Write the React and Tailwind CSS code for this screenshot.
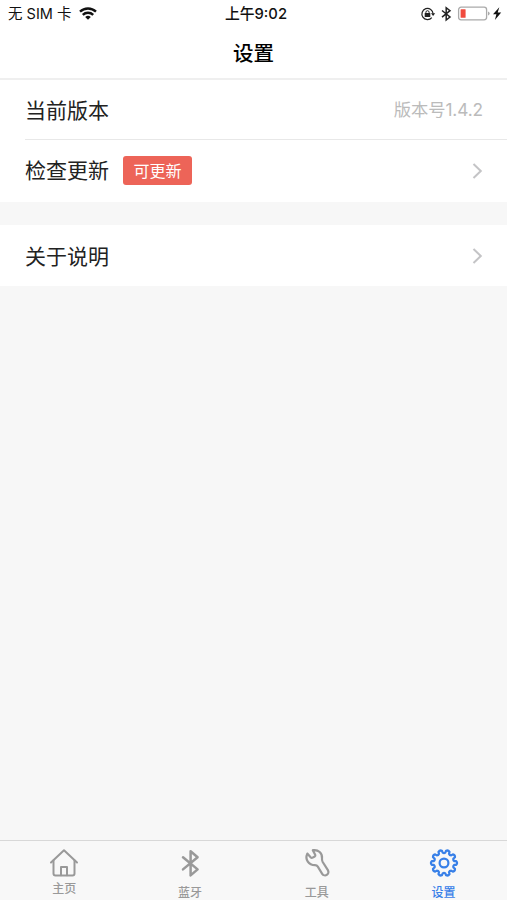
import clsx from 'clsx';

const GEAR_TEETH = 10;

/** Outline of the gear: rounded teeth around a 30x30 box. */
function gearPath() {
  const step = (Math.PI * 2) / GEAR_TEETH;
  const at = (radius, angle) => `${(15 + radius * Math.cos(angle)).toFixed(2)} ${(15 + radius * Math.sin(angle)).toFixed(2)}`;
  const parts = [];
  for (let i = 0; i < GEAR_TEETH; i++) {
    const a = i * step;
    parts.push(`${i === 0 ? 'M' : 'L'}${at(10.4, a - step * 0.3)}`);
    parts.push(`L${at(12.4, a - step * 0.23)}`);
    parts.push(`Q${at(13.8, a)} ${at(12.4, a + step * 0.23)}`);
    parts.push(`L${at(10.4, a + step * 0.3)}`);
    parts.push(`Q${at(9.4, a + step * 0.5)} ${at(10.4, a + step * 0.7)}`);
  }
  return `${parts.join('')}Z`;
}

const iconProps = {
  width: 30,
  height: 30,
  viewBox: '0 0 30 30',
  fill: 'none',
  stroke: 'currentColor',
  strokeLinecap: 'round',
  strokeLinejoin: 'round',
};

function HomeIcon() {
  return (
    <svg {...iconProps} strokeWidth="2">
      <path d="M2 14.5 15 2.2l13 12.3" />
      <path d="M4.5 12.5v13a2 2 0 0 0 2 2h17a2 2 0 0 0 2-2v-13" />
      <path d="M12 27.3V19h6v8.3" />
    </svg>
  );
}

function BluetoothIcon() {
  return (
    <svg {...iconProps} strokeWidth="2.5">
      <path d="m8 9.2 14.600 12.200-7 6V3.200l7 6L8 21.400" />
    </svg>
  );
}

function WrenchIcon() {
  return (
    <svg {...iconProps} strokeWidth="2.2">
      <path d="M10.800 2.200C16.300 1.200 20.600 5.300 20 10.500C19.800 12 20 12.800 20.700 14L25.900 22.200A3.300 3.300 0 0 1 20.200 25.800L15.800 18.700C15.200 17.700 14.300 17.200 12.900 17.200C6.800 17.200 2.600 11.500 5.300 5.600L8.600 9.300Q9.500 10.200 10.700 9.600L12.700 8.500Q13.700 7.900 13.200 6.800Z" />
    </svg>
  );
}

function GearIcon() {
  return (
    <svg {...iconProps} strokeWidth="2.2">
      <path d={gearPath()} />
      <circle cx="15" cy="15" r="4.4" />
    </svg>
  );
}

function WifiIcon() {
  return (
    <svg width="18" height="13" viewBox="0 0 18 13" fill="none" stroke="currentColor" strokeWidth="2.4">
      <path d="M1 4.7a11.600 11.600 0 0 1 16 0" />
      <path d="M3.8 7.8a7.500 7.500 0 0 1 10.400 0" />
      <path d="M9 12.8 6.200 10a4 4 0 0 1 5.600 0z" fill="currentColor" stroke="none" />
    </svg>
  );
}

function StatusIcons() {
  return (
    <svg width="84" height="16" viewBox="0 0 84 16" fill="none">
      {/* rotation lock */}
      <path d="M11.8 11.600a5.600 5.600 0 1 1 1.300-3.800" stroke="#222" strokeWidth="1.2" />
      <path d="m11 7.3 4.200 0-2.100 2.800z" fill="#222" />
      <rect x="4.7" y="7.1" width="5.6" height="4" rx=".5" fill="#222" />
      <path d="M5.9 7.500V6.300a1.600 1.600 0 0 1 3.200 0v1.200" stroke="#222" strokeWidth="1" />
      {/* bluetooth */}
      <path d="m22 4.500 8 6.500-3.800 3V1.700L30 4.700 22 11.200" stroke="#222" strokeWidth="1.5" />
      {/* battery */}
      <rect x="38.6" y="1.2" width="28" height="12.6" rx="2.5" stroke="#aaa" strokeWidth="1.3" />
      <rect x="40.6" y="3.2" width="5" height="8.6" rx=".5" fill="#f04a3e" />
      <path d="M68 5.500v4q1.700-.6 1.700-2t-1.700-2" fill="#aaa" />
      {/* charging */}
      <path d="m79.300 1.300-6.300 7h3.400l-1.500 5.700 6.300-7.500h-3.500z" fill="#111" />
    </svg>
  );
}

function Chevron() {
  return (
    <svg width="11" height="16" viewBox="0 0 11 16" fill="none" stroke="#c4c4c6" strokeWidth="2">
      <path d="m1.500 1 7.300 7-7.300 7" />
    </svg>
  );
}

function Row({ label, className, children }) {
  return (
    <div className={clsx('flex items-center pr-[24px] text-[21px] leading-none text-[#222]', className)}>
      <span>{label}</span>
      {children}
    </div>
  );
}

const TABS = [
  { label: '主页', Icon: HomeIcon, className: 'pl-[2px]', labelClass: 'mt-[2px]' },
  { label: '蓝牙', Icon: BluetoothIcon, labelClass: 'mt-[6px]' },
  { label: '工具', Icon: WrenchIcon, labelClass: 'mt-[6px]' },
  { label: '设置', Icon: GearIcon, labelClass: 'mt-[6px]', active: true },
];

export default function App() {
  return (
    <div className="flex h-screen flex-col overflow-hidden bg-[#f7f7f7] font-[Inter,'Noto_Sans_CJK_SC',sans-serif]">
      <header className="h-[80px] shrink-0 border-b-2 border-[#efefef] bg-white">
        {/* Status bar */}
        <div className="grid h-[27px] grid-cols-[1fr_auto_1fr] items-center text-[14.5px] leading-none text-[#111]">
          <div className="flex items-center gap-[8px] pl-[8px]">
            <span className="pt-[2px]">无 SIM 卡</span>
            <WifiIcon />
          </div>
          <span className="pt-[2px] pl-[5px] text-[14.8px] font-medium">上午9:02</span>
          <div className="flex justify-end pr-[3px]">
            <StatusIcons />
          </div>
        </div>
        <h1 className="flex h-[51px] items-center justify-center pt-[3px] text-[20.5px] font-medium leading-none text-black">设置</h1>
      </header>

      <section className="shrink-0 bg-white pl-[25px]">
        <Row label="当前版本" className="h-[60px] border-b border-[#e8e8e8] pt-[1px]">
          <span className="ml-auto text-[17.3px] tracking-[-0.1px] text-[#bbb]">版本号1.4.2</span>
        </Row>
        <Row label="检查更新" className="h-[62px] pb-[1px]">
          <span className="ml-[14px] flex h-[29px] w-[69px] items-center justify-center rounded-[3px] bg-[#ed6458] text-[16px] text-white">
            可更新
          </span>
          <span className="ml-auto"><Chevron /></span>
        </Row>
      </section>

      <section className="mt-[23px] shrink-0 bg-white pl-[25px]">
        <Row label="关于说明" className="h-[61px] pt-[1px]">
          <span className="ml-auto"><Chevron /></span>
        </Row>
      </section>

      <nav className="mt-auto grid h-[60px] shrink-0 grid-cols-4 border-t border-[#d8d8d8] bg-[#f8f8f8]">
        {TABS.map(({ label, Icon, className, labelClass, active }) => (
          <div
            key={label}
            className={clsx('flex flex-col items-center pt-[7px]', active ? 'text-[#3880e8]' : 'text-[#999]', className)}
          >
            <Icon />
            <span className={clsx('text-[12px] font-medium leading-[18px]', labelClass)}>{label}</span>
          </div>
        ))}
      </nav>
    </div>
  );
}
